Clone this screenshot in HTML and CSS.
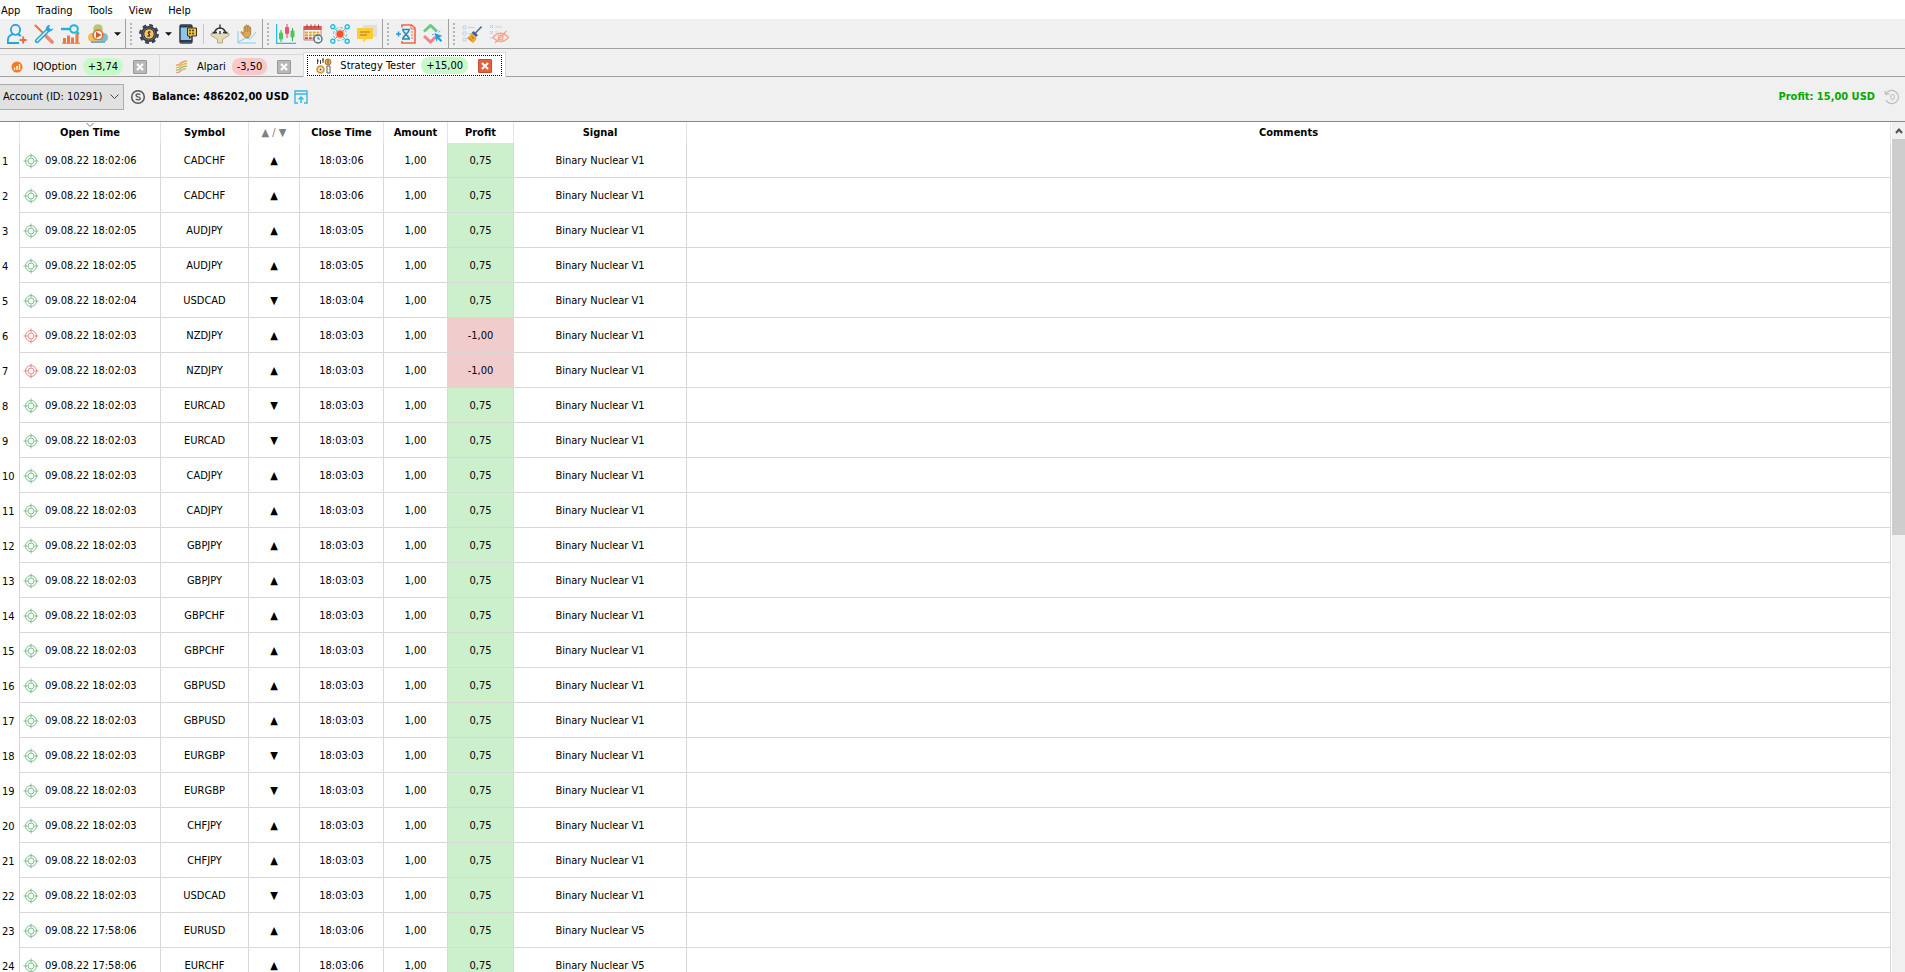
FILE: index.html
```html
<!DOCTYPE html>
<html lang="en">
<head>
    <meta charset="UTF-8">
    <title>Strategy Tester</title>
    <link rel="stylesheet" href="styles.css">
</head>
<body>
    <svg class="defs" aria-hidden="true">
        <symbol id="target" viewBox="0 0 16 16">
            <g fill="none" stroke="currentColor">
                <circle cx="8" cy="8" r="5.5"/>
                <circle cx="8" cy="8" r="3"/>
                <path d="M8 0.5v4M8 11.5v4M0.5 8h4M11.5 8h4"/>
            </g>
        </symbol>
        <symbol id="cross" viewBox="0 0 14 14">
            <path d="M4 4l6 6M10 4l-6 6" stroke="#fff" stroke-width="2"/>
        </symbol>
    </svg>

    <nav class="menu">
        <a href="#">App</a>
        <a href="#">Trading</a>
        <a href="#">Tools</a>
        <a href="#">View</a>
        <a href="#">Help</a>
    </nav>

    <div class="toolbar">
        <div class="group first">
            <button aria-label="Account">
                <svg viewBox="0 0 20 20" fill="none" stroke="#22a5dc" stroke-width="1.8" stroke-linecap="round">
                    <ellipse cx="8.5" cy="5.8" rx="4.6" ry="5"/>
                    <path d="M5.5 10.3C2 11.3 .9 13 .9 16v3h10.5M11.5 10.6l2 1"/>
                    <path d="M16.2 13.3v5.4M13.5 16h5.4" stroke="#ea6a45" stroke-width="2"/>
                </svg>
            </button>
            <button aria-label="Settings">
                <svg viewBox="0 0 20 20" fill="none" stroke-linecap="round">
                    <path d="M1.5 1.5L9 9" stroke="#f0703f" stroke-width="2"/>
                    <path d="M12 12l6 6" stroke="#f2866a" stroke-width="3.6"/>
                    <path d="M3 17L14 6" stroke="#22a8dc" stroke-width="4.4"/>
                    <path d="M3.2 16.8L13 7" stroke="#f0f0f0" stroke-width="1.4"/>
                    <path d="M16 .8c-3.5.8-5 3-3.5 5.7 2 2 5.5 1.3 7-2l-3 .8-1.5-1.5z" fill="#22a8dc"/>
                </svg>
            </button>
            <button aria-label="Statistics">
                <svg viewBox="0 0 20 20" fill="none">
                    <path d="M3.5 14v5M7.5 11.500V19M11.5 13.500V19M16 9.500V19" stroke="#ee7544" stroke-width="3"/>
                    <path d="M1 19.3h18" stroke="#ee7544"/>
                    <path d="M0 5h9" stroke="#22b4d8" stroke-width="2.4"/>
                    <circle cx="13" cy="5" r="3.8" stroke="#22b4d8" stroke-width="2"/>
                    <path d="M16 8l2 2" stroke="#22b4d8" stroke-width="2"/>
                </svg>
            </button>
            <button aria-label="Run">
                <svg viewBox="0 0 20 20">
                    <circle cx="10" cy="5" r="4.8" fill="#b8c86c"/>
                    <circle cx="4.5" cy="13.5" r="4.5" fill="#f0be52"/>
                    <circle cx="15.5" cy="13.5" r="4.5" fill="#7fbccb"/>
                    <path d="M3 18h14" stroke="#79aebc" stroke-width="2"/>
                    <circle cx="10" cy="11" r="5.8" fill="#e96f43"/>
                    <circle cx="10" cy="11" r="4" fill="#fff"/>
                    <path d="M8 7.8l5.5 3.2L8 14.2z" fill="#d95627"/>
                </svg>
            </button>
            <button class="drop" aria-label="Run options"><svg viewBox="0 0 8 4"><path d="M0 0h8L4 4z" fill="#111"/></svg></button>
        </div>
        <div class="group">
            <i class="grip"></i>
            <button aria-label="Money management">
                <svg viewBox="0 0 20 20">
                    <circle cx="10" cy="10" r="8.8" fill="none" stroke="#3c4252" stroke-width="2.2" stroke-dasharray="3.9 3"/>
                    <circle cx="10" cy="10" r="7.3" fill="#666b7c" stroke="#303846" stroke-width="1.4"/>
                    <circle cx="10" cy="10" r="5.2" fill="#fcc455" stroke="#343640"/>
                    <path d="M11.8 8H9.5q-1.3 1 .5 2t.5 2H8.2M10 7v6" fill="none" stroke="#433b2d"/>
                </svg>
            </button>
            <button class="drop" aria-label="Money options"><svg viewBox="0 0 8 4"><path d="M0 0h8L4 4z" fill="#111"/></svg></button>
            <button aria-label="Mobile">
                <svg viewBox="0 0 20 20">
                    <rect x="2" y="1" width="12" height="18" rx="1.5" fill="#8cc4ea" stroke="#2f3947" stroke-width="1.5"/>
                    <path d="M2 2.5h12M2 17h12" stroke="#2f3947" stroke-width="2"/>
                    <path d="M9.5 4h9v8h-5l-2 2.5V12h-2z" fill="#f2c338" stroke="#39352a"/>
                    <path d="M11 6.5h6M11 9.5h6" stroke="#554820" stroke-width="1.4" stroke-dasharray="2 1"/>
                </svg>
            </button>
            <i class="bar"></i>
            <button aria-label="Signal filter">
                <svg viewBox="0 0 20 20">
                    <path d="M1 9.5h18v2l-6.5 4V19h-5v-3.5L1 11.5z" fill="#e6dab4" stroke="#a09472" stroke-width=".7"/>
                    <path d="M4.5 9.5a5.5 5.5 0 1 1 11 0" fill="#f0f0f0" stroke="#333" stroke-width="1.5"/>
                    <path d="M10 .5V5M2.5 8.5H7M13 8.5h4.5M10 7v3" stroke="#333" stroke-width="1.4"/>
                </svg>
            </button>
            <button aria-label="Manual trading">
                <svg viewBox="0 0 20 20">
                    <path d="M1 7v12h18M1 18l8-4 4 1 6-7" fill="none" stroke="#8bc8e8"/>
                    <path d="M7 12.5C5.5 10.500 3 8 4.500 7.500L7 9.500V3q1-1 1.700 0V1.500q1-1 1.700 0V2q1-1 1.700 0v1.500q1-1 1.600 0V10l-2 3.500H8.500z" fill="#e0a758" stroke="#9c7440" stroke-width=".8"/>
                    <path d="M8.7 3v5M10.4 2v6M12.1 3v5" stroke="#9c7440" stroke-width=".6"/>
                </svg>
            </button>
        </div>
        <div class="group">
            <i class="grip"></i>
            <button aria-label="Chart">
                <svg viewBox="0 0 20 20">
                    <path d="M.6 0v19.4H20" fill="none" stroke="#20bfe0" stroke-width="1.3"/>
                    <path d="M5 6v12M16.5 4v13" stroke="#39a847"/>
                    <path d="M11 0v14" stroke="#e43e70"/>
                    <rect x="3" y="8.5" width="4" height="7" rx="1" fill="#4cc955"/>
                    <rect x="9" y="3" width="4" height="7" rx="1" fill="#f04d7d"/>
                    <rect x="14.5" y="6.5" width="4" height="7" rx="1" fill="#4cc955"/>
                </svg>
            </button>
            <button aria-label="Schedule">
                <svg viewBox="0 0 20 20">
                    <rect x="1" y="3" width="17" height="13" fill="#fff" stroke="#a56a60" stroke-width=".8"/>
                    <path d="M.6 2h17.800v4H.6z" fill="#e0524c"/>
                    <path d="M4 .5v3M8 .5v3M12 .5v3M15.5 .5v3" stroke="#8f3b36"/>
                    <path d="M2 8.500h15M2 11.300h15" stroke="#dba33c" stroke-width="2.2" stroke-dasharray="3 .8"/>
                    <path d="M2 14.2h10" stroke="#c0564a" stroke-width="2" stroke-dasharray="3 .8"/>
                    <circle cx="15" cy="15" r="4" fill="#eaf4f8" stroke="#527083" stroke-width="1.4"/>
                    <path d="M15 12.5V15h2" fill="none" stroke="#527083"/>
                </svg>
            </button>
            <button aria-label="Network">
                <svg viewBox="0 0 20 20" fill="none" stroke="#24b8dc" stroke-width="1.4">
                    <path d="M3.5 3.5l13 13M16.5 3.5l-13 13" stroke-width="1"/>
                    <circle cx="2.8" cy="2.8" r="2" fill="#f0f0f0"/>
                    <circle cx="17.2" cy="2.8" r="2" fill="#f0f0f0"/>
                    <circle cx="2.8" cy="17.2" r="2" fill="#f0f0f0"/>
                    <circle cx="17.2" cy="17.2" r="2" fill="#f0f0f0"/>
                    <circle cx="10" cy="10" r="6.5" stroke-width=".8" stroke-dasharray="3 2"/>
                    <circle cx="10" cy="10" r="4" fill="#f0522d" stroke="#f5ad98"/>
                </svg>
            </button>
            <button aria-label="Messages">
                <svg viewBox="0 0 20 20">
                    <path d="M6 1h14v12H6z" fill="#dedede"/>
                    <path d="M1 4h14q1 0 1 1v9q0 1-1 1H9.5l-3 4v-4H1q-1 0-1-1V5q0-1 1-1z" fill="#ffcc31"/>
                    <path d="M3 8h10M3 11h7" stroke="#c79420" stroke-width="1.3"/>
                </svg>
            </button>
        </div>
        <div class="group">
            <i class="grip"></i>
            <button aria-label="Import history">
                <svg viewBox="0 0 20 20" fill="none">
                    <path d="M6 3.5V1h9.5L19 4v15H6v-2" stroke="#ec6946" stroke-width="1.6"/>
                    <path d="M15 1v4h4M15 8h2M15 11h2M15 14h2" stroke="#ec6946"/>
                    <path d="M0 10h5M2.5 7.5v5" stroke="#249fcf" stroke-width="1.5"/>
                    <path d="M6 5.5h8M6 15h8M7 6c0 3 6 5.5 6 9M13 6c0 3-6 5.5-6 9" stroke="#238dc0" stroke-width="1.6"/>
                </svg>
            </button>
            <button aria-label="Trade by click">
                <svg viewBox="0 0 20 20" fill="none">
                    <path d="M1 7.5l6.500-6 6.500 6" stroke="#6fca7b" stroke-width="3"/>
                    <path d="M1 12l6.500 6 5-5" stroke="#ef8587" stroke-width="3"/>
                    <path d="M11.5 9l8 3-3.300 1.300 3 3.200-1.500 1.500-3-3.200-1.200 3.200z" fill="#219fdb"/>
                    <path d="M13 6v2M9 10.5h2M17 6.5l-1.500 2" stroke="#56b9df"/>
                </svg>
            </button>
        </div>
        <div class="group last">
            <i class="grip"></i>
            <button aria-label="Clear list">
                <svg viewBox="0 0 20 20" fill="none">
                    <path d="M1 2h3v3H1zM1 8h3v3H1zM1 14h3v3H1z" stroke="#b9d5f2"/>
                    <path d="M6 3.5h7M6 9.5h3" stroke="#b9d5f2"/>
                    <path d="M19.5 2.5l-6 6.500" stroke="#5a6d98" stroke-width="1.6"/>
                    <path d="M10.5 8l4.500 4" stroke="#3f5f98" stroke-width="3"/>
                    <path d="M9 9l5.500 4.500c0 2-1.500 4-3.500 5.500L4.500 14c2-.5 3.500-2.500 4.500-5z" fill="#f2a632"/>
                    <path d="M7 13.5l2.500 3M9.5 12l2 3" stroke="#c06a24"/>
                </svg>
            </button>
            <button aria-label="Hide list">
                <svg viewBox="0 0 20 20" fill="none">
                    <path d="M1 1l3 3M4 1L1 4M1 7l3 3M4 7l-3 3" stroke="#a9c8ef"/>
                    <path d="M6 3h7M6 8h3M1 14h3" stroke="#b9d5f2"/>
                    <path d="M4 13.5q7.500-8.500 15.500 0-8 8-15.500 0z" stroke="#f5a48e" stroke-width="1.4"/>
                    <circle cx="11.7" cy="13.5" r="2.3" stroke="#f5a48e" stroke-width="1.3"/>
                    <path d="M6 19L17.5 7" stroke="#f5a48e" stroke-width="1.4"/>
                </svg>
            </button>
        </div>
    </div>

    <div class="tabs">
        <div class="tab">
            <svg class="tab-icon" viewBox="0 0 16 16">
                <circle cx="8" cy="8" r="5.5" fill="#f47b20"/>
                <path d="M5.5 8.5v2.5M8 7v4M10.5 5v6" stroke="#fff" stroke-width="1.4"/>
            </svg>
            <a href="#">IQOption</a>
            <span class="badge win">+3,74</span>
            <button class="close" aria-label="Close IQOption"><svg><use href="#cross"/></svg></button>
        </div>
        <div class="tab second">
            <svg class="tab-icon" viewBox="0 0 16 16" fill="none" stroke-width="1.4">
                <path d="M3 6q3 .5 4.500-1.500T14 2" stroke="#f0a04a"/>
                <path d="M3 8.500q3 .5 4.500-1.500T14 4.500" stroke="#e8b45a"/>
                <path d="M3 11q3 .5 4.500-1.500T14 7" stroke="#9cc862"/>
                <path d="M3 13.500q3 .5 4.500-1.500T13 9.500" stroke="#eca38a"/>
            </svg>
            <a href="#">Alpari</a>
            <span class="badge loss">-3,50</span>
            <button class="close" aria-label="Close Alpari"><svg><use href="#cross"/></svg></button>
        </div>
        <div class="tab active">
            <div class="focus">
                <svg class="tab-icon" viewBox="0 0 16 16" fill="none">
                    <path d="M1.5 1v5M4.5 2v4M7 0v5M1 3h2M6 2h2" stroke="#4d4033"/>
                    <circle cx="12" cy="4" r="3" fill="#edb24d" stroke="#a1752e"/>
                    <circle cx="4.5" cy="11.5" r="3.3" stroke="#d79a3b" stroke-width="2"/>
                    <circle cx="4.5" cy="11.5" r="1" fill="#5c4630"/>
                    <path d="M11 8h3v7h-3zM12 2v4" stroke="#665b50"/>
                </svg>
                <a href="#">Strategy Tester</a>
                <span class="badge win">+15,00</span>
                <button class="close" aria-label="Close Strategy Tester"><svg><use href="#cross"/></svg></button>
            </div>
        </div>
    </div>

    <div class="account">
        <select aria-label="Account">
            <option>Account (ID: 10291)</option>
        </select>
        <svg class="coin" viewBox="0 0 16 16" fill="none" stroke="#555">
            <circle cx="8" cy="8" r="6.3" stroke-width="1.5"/>
            <path d="M10.3 5.6q-2.300-1.300-4 0-1 1.600 1.700 2.300 3 .7 2 2.300-1.600 1.400-4.300 0" stroke-width="1.3"/>
        </svg>
        <b>Balance: 486202,00 USD</b>
        <button class="deposit" aria-label="Deposit">
            <svg viewBox="0 0 14 14" fill="none" stroke="#35b9df" stroke-width="1.4">
                <path d="M4 13H1V1h12v12h-3M1 4h12M7 13V7M4.5 9.5L7 7l2.500 2.500"/>
            </svg>
        </button>
        <b class="total">Profit: 15,00 USD</b>
        <button class="reset" aria-label="Reset profit">
            <svg viewBox="0 0 16 16" fill="none" stroke="#bdbdbd">
                <path d="M2.3 4.5A6.600 6.600 0 1 1 2 11" stroke-width="1.3"/>
                <path d="M.7 2.2l1.200 3.300 3.400-.8" stroke-width="1.3"/>
                <ellipse cx="8.5" cy="8" rx="1.8" ry="2.7"/>
            </svg>
        </button>
    </div>

    <main class="report">
        <div class="rows">
            <table>
                <colgroup>
                    <col class="c-num"><col class="c-open"><col class="c-symbol"><col class="c-dir"><col class="c-close"><col class="c-amount"><col class="c-profit"><col class="c-signal"><col>
                </colgroup>
                <thead>
                    <tr>
                        <th></th>
                        <th class="sorted">Open Time
                            <svg viewBox="0 0 8 4" fill="none" stroke="#777"><path d="M.5 0L4 3.5 7.5 0"/></svg>
                        </th>
                        <th>Symbol</th>
                        <th class="updown">▲ / ▼</th>
                        <th>Close Time</th>
                        <th>Amount</th>
                        <th>Profit</th>
                        <th>Signal</th>
                        <th>Comments</th>
                    </tr>
                </thead>
                <tbody></tbody>
            </table>
        </div>
        <div class="scroll" aria-hidden="true">
            <svg viewBox="0 0 8 6" fill="none" stroke="#505050" stroke-width="2"><path d="M1 5l3-3.5L7 5"/></svg>
            <div class="track"><div class="thumb"></div></div>
        </div>
    </main>

    <script>
    // open time, symbol, direction, close time, profit, signal
    const trades = [
      ['09.08.22 18:02:06', 'CADCHF', 'up', '18:03:06', 0.75, 'V1'],
      ['09.08.22 18:02:06', 'CADCHF', 'up', '18:03:06', 0.75, 'V1'],
      ['09.08.22 18:02:05', 'AUDJPY', 'up', '18:03:05', 0.75, 'V1'],
      ['09.08.22 18:02:05', 'AUDJPY', 'up', '18:03:05', 0.75, 'V1'],
      ['09.08.22 18:02:04', 'USDCAD', 'down', '18:03:04', 0.75, 'V1'],
      ['09.08.22 18:02:03', 'NZDJPY', 'up', '18:03:03', -1, 'V1'],
      ['09.08.22 18:02:03', 'NZDJPY', 'up', '18:03:03', -1, 'V1'],
      ['09.08.22 18:02:03', 'EURCAD', 'down', '18:03:03', 0.75, 'V1'],
      ['09.08.22 18:02:03', 'EURCAD', 'down', '18:03:03', 0.75, 'V1'],
      ['09.08.22 18:02:03', 'CADJPY', 'up', '18:03:03', 0.75, 'V1'],
      ['09.08.22 18:02:03', 'CADJPY', 'up', '18:03:03', 0.75, 'V1'],
      ['09.08.22 18:02:03', 'GBPJPY', 'up', '18:03:03', 0.75, 'V1'],
      ['09.08.22 18:02:03', 'GBPJPY', 'up', '18:03:03', 0.75, 'V1'],
      ['09.08.22 18:02:03', 'GBPCHF', 'up', '18:03:03', 0.75, 'V1'],
      ['09.08.22 18:02:03', 'GBPCHF', 'up', '18:03:03', 0.75, 'V1'],
      ['09.08.22 18:02:03', 'GBPUSD', 'up', '18:03:03', 0.75, 'V1'],
      ['09.08.22 18:02:03', 'GBPUSD', 'up', '18:03:03', 0.75, 'V1'],
      ['09.08.22 18:02:03', 'EURGBP', 'down', '18:03:03', 0.75, 'V1'],
      ['09.08.22 18:02:03', 'EURGBP', 'down', '18:03:03', 0.75, 'V1'],
      ['09.08.22 18:02:03', 'CHFJPY', 'up', '18:03:03', 0.75, 'V1'],
      ['09.08.22 18:02:03', 'CHFJPY', 'up', '18:03:03', 0.75, 'V1'],
      ['09.08.22 18:02:03', 'USDCAD', 'down', '18:03:03', 0.75, 'V1'],
      ['09.08.22 17:58:06', 'EURUSD', 'up', '18:03:06', 0.75, 'V5'],
      ['09.08.22 17:58:06', 'EURCHF', 'up', '18:03:06', 0.75, 'V5']
    ];
    const tbody = document.querySelector('tbody');
    trades.forEach(([open, symbol, dir, close, profit, version], i) => {
      const cls = profit >= 0 ? 'pos' : 'neg';
      const tr = document.createElement('tr');
      tr.innerHTML = `
        <td class="num">${i + 1}</td>
        <td><div class="open ${cls}"><svg><use href="#target"/></svg>${open}</div></td>
        <td>${symbol}</td>
        <td>${dir === 'up' ? '▲' : '▼'}</td>
        <td>${close}</td>
        <td>1,00</td>
        <td class="profit ${cls}">${profit.toFixed(2).replace('.', ',')}</td>
        <td>Binary Nuclear ${version}</td>
        <td></td>
      `;
      tbody.appendChild(tr);
    });
    </script>
</body>
</html>
```
FILE: styles.css
```css
* { box-sizing: border-box; }
body {
    margin: 0;
    height: 100vh;
    display: flex;
    flex-direction: column;
    overflow: hidden;
    background: #f0f0f0;
    color: #000;
    font-family: 'DejaVu Sans Condensed', 'DejaVu Sans', Tahoma, sans-serif;
    font-size: 11px;
    line-height: 14px;
}
a { color: inherit; text-decoration: none; }
button {
    display: flex;
    align-items: center;
    justify-content: center;
    padding: 0;
    border: 0;
    background: none;
}
svg { display: block; flex: none; }
.defs { position: absolute; width: 0; height: 0; }

.menu {
    display: flex;
    align-items: center;
    gap: 16px;
    height: 19px;
    padding: 2px 1px 0;
    background: #fff;
    flex: none;
}

/* toolbar */
.toolbar {
    display: flex;
    height: 30px;
    flex: none;
    border-bottom: 1px solid #a0a0a0;
}
.group {
    display: flex;
    align-items: center;
    padding-right: 2px;
    border-right: 1px solid #a0a0a0;
}
.group.first { padding-left: 3px; }
.group.last { border-right: 0; }
.group button { width: 27px; height: 28px; }
.group button svg { width: 20px; height: 20px; }
.group button.drop { width: 12px; }
.group button.drop svg { width: 7px; height: 4px; }
.grip {
    width: 2px;
    height: 22px;
    margin: 0 3px 0 4px;
    background: repeating-linear-gradient(#b4b4b4 0 2px, #f0f0f0 2px 4px);
}
.bar {
    width: 1px;
    height: 20px;
    margin: 0 2px;
    background: #c8c8c8;
}

/* tabs */
.tabs {
    display: flex;
    align-items: flex-end;
    height: 28px;
    flex: none;
    border-bottom: 1px solid #a0a0a0;
}
.tab {
    display: flex;
    align-items: center;
    height: 22px;
    padding: 2px 12px 0 9px;
    border-top: 1px solid #d9d9d9;
    border-right: 1px solid #d9d9d9;
}
.tab.second { padding-left: 13px; border-right: 0; }
.tab.active {
    height: 25px;
    margin-bottom: -1px;
    padding: 2px 3px;
    background: #fff;
    border: 1px solid #d9d9d9;
    border-bottom: 0;
}
.focus {
    display: flex;
    align-items: center;
    height: 21px;
    padding: 1px 9px 0 8px;
    border: 1px dotted #000;
}
.tab-icon { width: 16px; height: 16px; margin-right: 8px; }
.badge {
    height: 17px;
    margin: 0 10px 0 6px;
    padding: 0 5px;
    border-radius: 8px;
    line-height: 17px;
}
.badge.win { background: #c8fac8; }
.badge.loss { background: #fac8c8; }
.close {
    width: 14px;
    height: 14px;
    background: #b8b8b8;
    border: 1px solid #999;
    border-radius: 1px;
}
.close svg { width: 14px; height: 14px; }
.active .close { background: #e2623f; border-color: #c64f30; }

/* account line */
.account {
    display: flex;
    align-items: center;
    height: 45px;
    padding: 0 5px 5px 0;
    flex: none;
    border-bottom: 1px solid #828790;
}
.account select {
    appearance: none;
    width: 124px;
    height: 26px;
    padding: 0 20px 0 3px;
    border: 1px solid #adadad;
    border-left: 0;
    border-radius: 0;
    background: #e1e1e1 url("data:image/svg+xml,%3Csvg xmlns='http://www.w3.org/2000/svg' width='9' height='5' fill='none' stroke='%23444'%3E%3Cpath d='M.5 .5L4.5 4.5 8.5 .5'/%3E%3C/svg%3E") no-repeat right 4px center;
    color: #000;
    font: inherit;
}
.coin { width: 16px; height: 16px; margin: 0 6px; }
.deposit { margin-left: 5px; }
.deposit svg { width: 14px; height: 14px; }
.total { margin-left: auto; color: #00aa00; }
.reset { margin-left: 9px; }
.reset svg { width: 16px; height: 16px; }

/* trades */
.report {
    display: flex;
    flex: 1;
    min-height: 0;
    background: #fff;
}
.rows { flex: 1; overflow: hidden; }
table {
    width: 100%;
    table-layout: fixed;
    border-collapse: separate;
    border-spacing: 0;
}
.c-num { width: 20px; }
.c-open { width: 141px; }
.c-symbol { width: 88px; }
.c-dir { width: 51px; }
.c-close { width: 84px; }
.c-amount { width: 64px; }
.c-profit { width: 66px; }
.c-signal { width: 173px; }
th, td {
    padding: 0;
    border-right: 1px solid #d8d8d8;
    text-align: center;
}
th {
    height: 21px;
    padding-top: 1px;
    border-color: #e5e5e5;
    font-weight: bold;
}
td {
    height: 35px;
    padding-top: 2px;
    border-bottom: 1px solid #d8d8d8;
}
.sorted { position: relative; }
.sorted svg {
    position: absolute;
    top: 1px;
    left: 66px;
    width: 8px;
    height: 4px;
}
.updown { color: #808080; font-weight: normal; }
.num {
    padding-left: 2px;
    text-align: left;
    border-bottom: 0;
}
.open {
    display: flex;
    align-items: center;
    gap: 6px;
    padding-left: 3px;
}
.open svg { width: 16px; height: 16px; }
.open.pos svg { color: #7fbf8d; }
.open.neg svg { color: #e98787; }
.profit.pos { background: #ccf0cc; }
.profit.neg { background: #f0cccc; }

.scroll {
    display: flex;
    flex-direction: column;
    align-items: center;
    width: 13px;
    margin-left: 1px;
    background: #f0f0f0;
}
.scroll > svg { width: 8px; height: 6px; margin: 6px 0 5px; }
.track { width: 100%; flex: 1; }
.thumb { height: 47.5%; background: #cdcdcd; }
```
